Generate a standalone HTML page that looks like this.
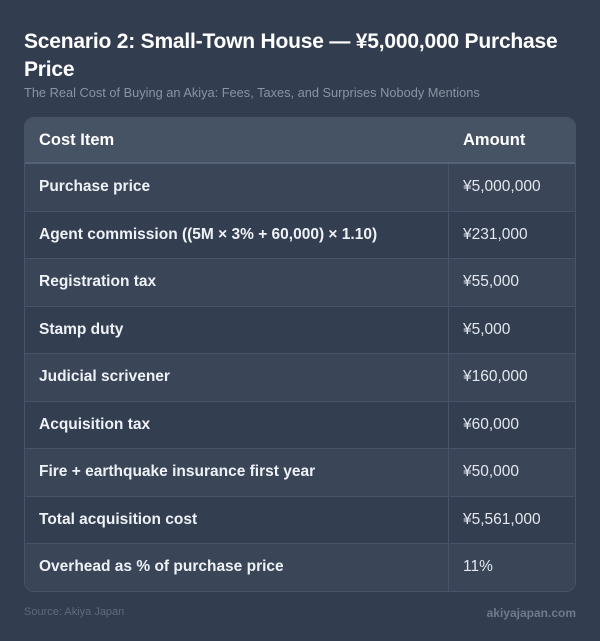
<!DOCTYPE html>
<html><head><style>
body{margin:0;width:600px;height:641px;background:#323d50;font-family:"Liberation Sans",sans-serif;position:relative;overflow:hidden}
h1{position:absolute;left:24px;top:28px;width:545px;margin:0;font-size:21px;line-height:28px;font-weight:bold;color:#fff;letter-spacing:-0.2px}
.sub{position:absolute;left:24px;top:85px;font-size:12.8px;color:#8a94a3}
.card{position:absolute;left:24px;top:117px;width:550px;height:473px;border:1px solid #46536a;border-radius:10px;overflow:hidden}
table{border-collapse:collapse;width:100%}
th{background:#465365;color:#fff;font-size:16.5px;font-weight:bold;text-align:left;height:44px;padding:0 14px;border-bottom:2px solid #56627a}
td{height:46.5px;padding:0 14px;font-size:15.5px;color:#eef1f5;border-top:1px solid #46536a}
td:first-child{font-weight:bold}
td:last-child,th:last-child{border-left:1px solid #46536a;width:98px;color:#e4e8ee}
th:last-child{color:#fff}
tr:nth-child(odd) td{background:#3a4558}
tr:nth-child(even) td{background:#333e51}
tbody tr:first-child td{border-top:none}
.src{position:absolute;left:24px;top:606px;font-size:11px;color:#5f6a7a}
.dom{position:absolute;right:24px;top:606px;font-size:12px;font-weight:bold;color:#6f7a8a}
</style></head><body>
<h1>Scenario 2: Small-Town House — ¥5,000,000 Purchase Price</h1>
<div class="sub">The Real Cost of Buying an Akiya: Fees, Taxes, and Surprises Nobody Mentions</div>
<div class="card"><table>
<thead><tr><th>Cost Item</th><th>Amount</th></tr></thead>
<tbody>
<tr><td>Purchase price</td><td>¥5,000,000</td></tr>
<tr><td>Agent commission ((5M × 3% + 60,000) × 1.10)</td><td>¥231,000</td></tr>
<tr><td>Registration tax</td><td>¥55,000</td></tr>
<tr><td>Stamp duty</td><td>¥5,000</td></tr>
<tr><td>Judicial scrivener</td><td>¥160,000</td></tr>
<tr><td>Acquisition tax</td><td>¥60,000</td></tr>
<tr><td>Fire + earthquake insurance first year</td><td>¥50,000</td></tr>
<tr><td>Total acquisition cost</td><td>¥5,561,000</td></tr>
<tr><td>Overhead as % of purchase price</td><td>11%</td></tr>
</tbody></table></div>
<div class="src">Source: Akiya Japan</div>
<div class="dom">akiyajapan.com</div>
</body></html>
